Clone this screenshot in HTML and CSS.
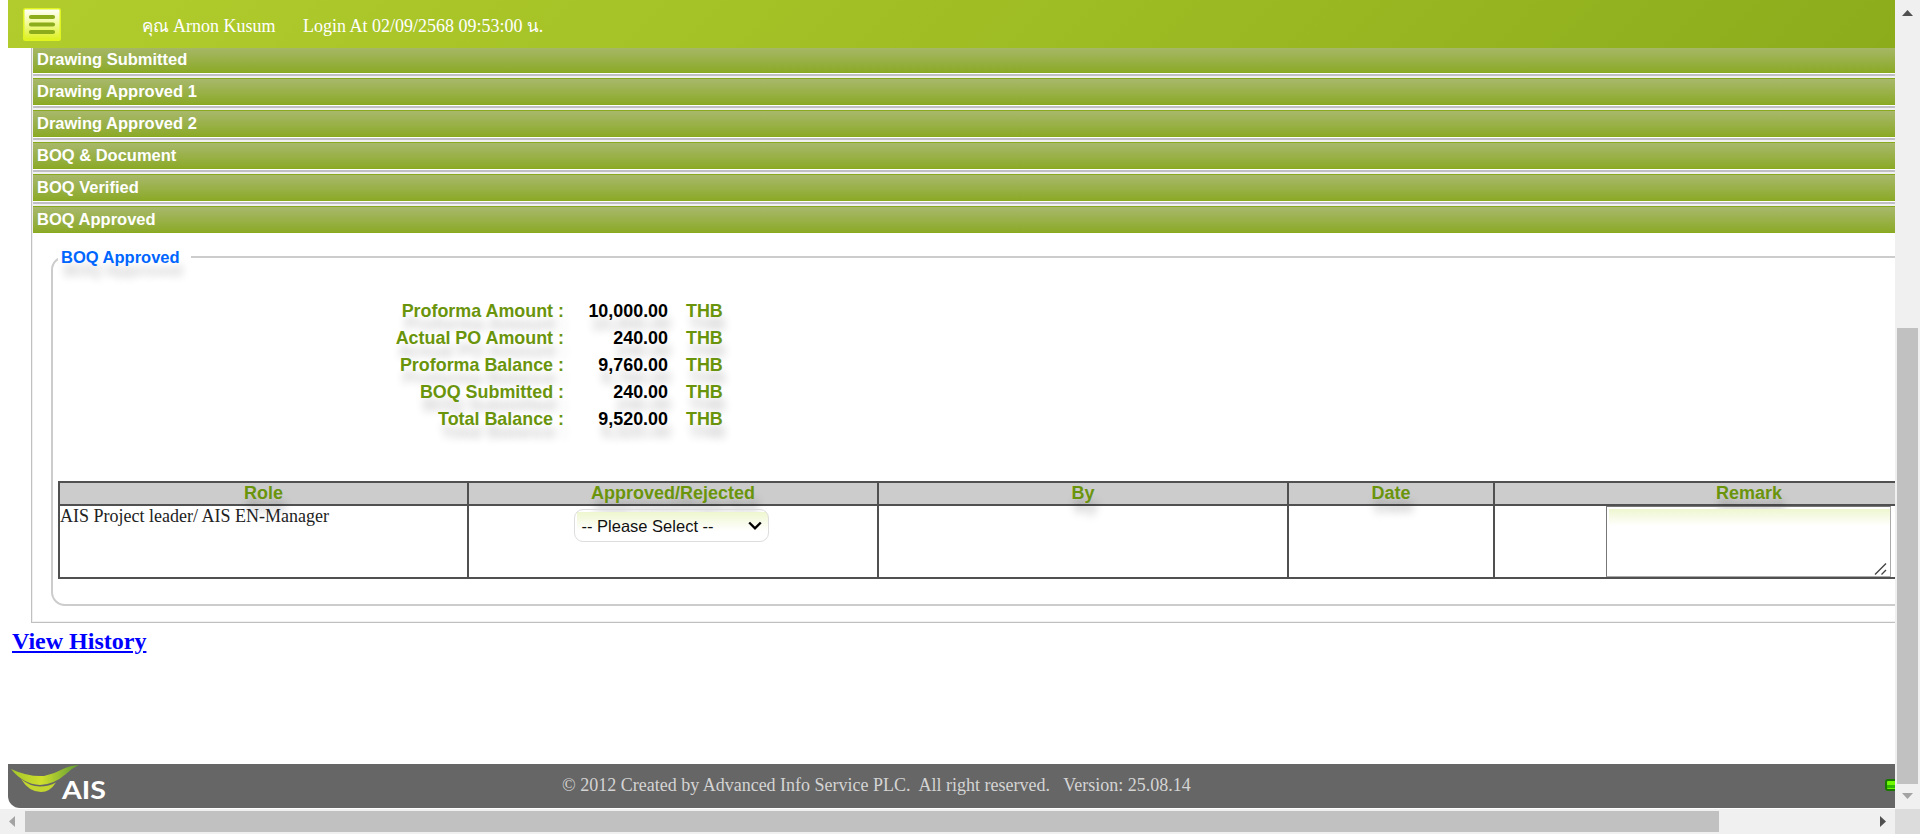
FILE: index.html
```html
<!DOCTYPE html>
<html lang="th">
<head>
<meta charset="utf-8">
<title>BOQ Approved</title>
<link rel="stylesheet" href="styles.css">
</head>
<body>
<div class="window">
  <div class="view">
    <header class="topbar">
      <svg class="menu" width="38" height="33" viewBox="0 0 38 33">
        <defs><linearGradient id="mg" x1="0" y1="0" x2="0" y2="1"><stop offset="0" stop-color="#fff"/><stop offset=".45" stop-color="#f2fa9a"/><stop offset="1" stop-color="#dcf01c"/></linearGradient></defs>
        <rect x=".75" y=".75" width="36.5" height="31.5" rx="1.5" fill="url(#mg)" stroke="#e0f520" stroke-width="1.5"/>
        <path d="M8 9h22M8 16.5h22M8 24h22" stroke="#8cac1c" stroke-width="4.2" stroke-linecap="round"/>
      </svg>
      <span class="user"><span class="thai">คุณ</span> Arnon Kusum</span>
      <span class="login">Login At 02/09/2568 09:53:00 <span class="thai">น</span>.</span>
    </header>
    <main class="accordion">
      <h3 class="bar first"><span>Drawing Submitted</span></h3>
      <h3 class="bar"><span>Drawing Approved 1</span></h3>
      <h3 class="bar"><span>Drawing Approved 2</span></h3>
      <h3 class="bar"><span>BOQ &amp; Document</span></h3>
      <h3 class="bar"><span>BOQ Verified</span></h3>
      <h3 class="bar open"><span>BOQ Approved</span></h3>
      <section class="panel">
        <fieldset class="box">
          <legend class="legend">BOQ Approved</legend>
          <div class="amounts">
            <span class="lbl">Proforma Amount :</span><span class="num">10,000.00</span><span class="cur">THB</span>
            <span class="lbl">Actual PO Amount :</span><span class="num">240.00</span><span class="cur">THB</span>
            <span class="lbl">Proforma Balance :</span><span class="num">9,760.00</span><span class="cur">THB</span>
            <span class="lbl">BOQ Submitted :</span><span class="num">240.00</span><span class="cur">THB</span>
            <span class="lbl">Total Balance :</span><span class="num">9,520.00</span><span class="cur">THB</span>
          </div>
          <div class="grid">
            <div class="th">Role</div><div class="th">Approved/Rejected</div><div class="th">By</div><div class="th">Date</div><div class="th">Remark</div>
            <div class="td">AIS Project leader/ AIS EN-Manager</div>
            <div class="td mid"><div class="select"><span>-- Please Select --</span>
              <svg width="14" height="10" viewBox="0 0 14 10"><path d="M1.2 1.5 7 7.3l5.800-5.800" fill="none" stroke="#000" stroke-width="2.4"/></svg></div></div>
            <div class="td"></div><div class="td"></div>
            <div class="td remark"><div class="area"><svg width="14" height="14" viewBox="0 0 14 14"><path d="M1 12.500 12 1.500M7.500 12.500 12 8" stroke="#444" stroke-width="1.400"/></svg></div></div>
          </div>
        </fieldset>
      </section>
    </main>
    <a class="history">View History</a>
    <footer class="footer">
      <svg class="logo" width="100" height="44" viewBox="0 0 100 44">
        <defs><linearGradient id="lg"><stop offset="0" stop-color="#a4c62c"/><stop offset=".45" stop-color="#cfdf2c"/><stop offset="1" stop-color="#5c9a35"/></linearGradient></defs>
        <path d="M3 5Q20 13 36 12Q46 10 55 5Q62 1.500 71 1Q64 4 58 10Q46 20.500 32 21Q15 20 3 5Z" fill="url(#lg)"/>
        <path d="M13 15Q22 22.500 32 22.500Q41 22.500 48 18.500Q42 28 33 28Q21 28 13 15Z" fill="#c3d62f"/>
        <text class="logo-text" x="54" y="35" textLength="44" lengthAdjust="spacingAndGlyphs">AIS</text>
      </svg>
      <span class="copy">© 2012 Created by Advanced Info Service PLC.&nbsp; All right reserved.&nbsp;&nbsp; Version: 25.08.14</span>
      <span class="led"></span>
    </footer>
  </div>
  <div class="vbar"><svg class="up" width="11" height="6"><path d="M0 6 5.500 0 11 6z" fill="#505050"/></svg><div class="vthumb"></div><svg class="down" width="11" height="6"><path d="M0 0 5.500 6 11 0z" fill="#a3a3a3"/></svg></div>
  <div class="hbar"><svg class="left" width="6" height="11"><path d="M6 0 0 5.500 6 11z" fill="#a3a3a3"/></svg><div class="hthumb"></div><svg class="right" width="6" height="11"><path d="M0 0 6 5.500 0 11z" fill="#505050"/></svg></div>
  <div class="corner"></div>
</div>
</body>
</html>
```
FILE: styles.css
```css
* { box-sizing: border-box; }
body { margin: 0; background: #fff; font-family: "Liberation Serif", "Noto Sans", serif; overflow: hidden; }
.window { display: grid; grid-template-columns: 1895px 25px; grid-template-rows: 809px 25px; }
.view { overflow: hidden; display: flex; flex-direction: column; padding-left: 8px; width: 1895px; height: 809px; }
.topbar { height: 48px; flex: none; display: flex; align-items: flex-start; background: linear-gradient(135deg, #b1cc2c, #a0be24 50%, #8cac1c); color: #fff; font-size: 18px; line-height: 20px; white-space: nowrap; }
.menu { margin: 8px 0 0 15px; }
.user { margin: 16px 0 0 81px; width: 161px; }
.login { margin-top: 16px; }
.thai { font-size: 17px; letter-spacing: -0.3px; }
.accordion { flex: none; width: 2040px; margin-left: 23px; border-left: 1px solid #c0c0c0; border-bottom: 1px solid #c0c0c0; height: 575px; padding-left: 1px; box-shadow: inset 1px -1px #f0f0f0; }
.bar { margin: 0; height: 32px; padding: 0; background: linear-gradient(#f0f0f0 0 2px, #88aa1c 2px 3px, #a8b86c 3px, #8caa28 28px, #88aa1c 28px 29px, #fff 29px 30px, #c0c0c4 30px 32px); color: #fff; font: bold 16.5px/20px "Liberation Sans", sans-serif; }
.bar span { display: block; padding: 5px 0 0 4px; }
.bar.first { height: 28px; background: linear-gradient(#a6b766, #8caa28 24px, #88aa1c 24px 25px, #fff 25px 26px, #c0c0c4 26px 28px); }
.bar.first span { padding-top: 1px; }
.bar.open { height: 29px; }
.panel { padding: 14px 0 0 18px; }
.box { margin: 0; padding: 0 0 0 5px; border: 2px solid #ccc; border-radius: 14px; height: 359px; width: 2000px; min-width: 0; }
.legend { margin: 0; padding: 0 11px 0 3px; width: 133px; height: 20px; font: bold 16.5px/20px "Liberation Sans", sans-serif; color: #06f; text-shadow: 3px 13px 8px rgba(0,0,0,.2); white-space: nowrap; }
.amounts { display: grid; grid-template-columns: 506px 104px 60px; grid-auto-rows: 27px; margin-top: 31px; font: bold 17.9px/27px "Liberation Sans", sans-serif; text-align: right; text-shadow: 3px 13px 8px rgba(0,0,0,.2); }
.lbl { color: #6a940c; }
.num { color: #000; }
.cur { text-align: left; padding-left: 18px; color: #6a940c; }
.grid { display: grid; grid-template-columns: 409px 410px 410px 206px 510px; grid-template-rows: 23px 73px; margin-top: 48px; width: 1947px; height: 98px; border-top: 2px solid #505050; border-left: 2px solid #505050; }
.th, .td { border-right: 2px solid #505050; border-bottom: 2px solid #505050; }
.th { background: #ccc; color: #6a940c; text-align: center; font: bold 18px/21px "Liberation Sans", sans-serif; text-shadow: 3px 13px 8px rgba(0,0,0,.25); }
.td { font-size: 18px; line-height: 21px; white-space: nowrap; color: #222; }
.mid { display: flex; justify-content: center; align-items: flex-start; padding: 3px 4px 0 0; }
.select { width: 195px; height: 33px; border: 1px solid #ddd; border-radius: 9px; display: flex; justify-content: space-between; align-items: center; padding: 0 6px 0 7px; font: 16.5px "Liberation Sans", sans-serif; color: #111; background: linear-gradient(#eef6cf, #fff) 2px 2px / 100% 19px no-repeat; }
.select span { padding-top: 1px; }
.remark { padding-left: 111px; }
.area { width: 285px; height: 71px; border: 1px solid #aaa; border-left-color: #777; border-top-color: #777; display: flex; justify-content: flex-end; align-items: flex-end; padding: 0 2px 0 0; background: linear-gradient(#eef6cf, #fff) 2px 2px / 100% 17px no-repeat; }
.history { flex: none; margin: 4px 0 0 4px; font-size: 24px; line-height: 28px; font-weight: bold; color: #00f; text-decoration: underline; }
.footer { flex: none; margin-top: 109px; height: 44px; background: #666; border-radius: 0 0 0 12px; display: flex; align-items: flex-start; color: #d4d4d4; font-size: 18px; line-height: 20px; white-space: nowrap; }
.logo { flex: none; }
.logo-text { font: bold 25px Lato, sans-serif; fill: #fff; }
.copy { flex: none; margin: 11px 0 0 454px; width: 1323px; }
.led { flex: none; margin-top: 15px; width: 20px; height: 12px; border: 2px solid #187800; border-radius: 3px; background: linear-gradient(#70f800 0 4px, #30b800 4px 7px, #70f800 7px); }
.vbar { background: #f0f0f0; display: flex; flex-direction: column; align-items: center; }
.up { margin-top: 10px; }
.vthumb { width: 21px; height: 456px; margin-top: 312px; background: #c1c1c1; }
.down { margin-top: 9px; }
.hbar { background: #f0f0f0; display: flex; align-items: center; }
.left { margin-left: 9px; }
.hthumb { width: 1694px; height: 21px; margin-left: 10px; background: #c1c1c1; }
.right { margin-left: 161px; }
.corner { background: #dcdcdc; }
```
